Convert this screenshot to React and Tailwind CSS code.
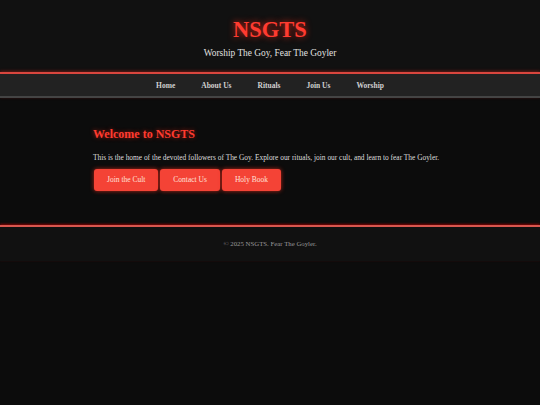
export default function App() {
  const serif = { fontFamily: '"Liberation Serif", "DejaVu Serif", serif' };
  const links = ["Home", "About Us", "Rituals", "Join Us", "Worship"];
  const buttons = ["Join the Cult", "Contact Us", "Holy Book"];
  return (
    <div className="min-h-[405px] bg-[#0c0c0c] text-[#dddddd]" style={serif}>
      <header className="h-[72px] bg-[#111111] flex flex-col items-center pt-[15px]">
        <h1 className="text-[22.5px] leading-[30px] font-bold text-[#ff3b30] [text-shadow:0_0_6px_rgba(255,40,20,0.8)]">
          NSGTS
        </h1>
        <p className="mt-[1px] text-[9.4px] leading-[14px] text-[#e0e0e0]">Worship The Goy, Fear The Goyler</p>
      </header>
      <nav className="h-[26px] pt-[2px] bg-[#222222] border-t-2 border-t-[#d9463e] border-b-2 border-b-[#444444] shadow-[0_-1px_3px_rgba(220,40,30,0.4)] flex items-center justify-center">
        {links.map((l) => (
          <a key={l} className="px-[13px] text-[7.5px] font-bold text-[#d0d0d0]">
            {l}
          </a>
        ))}
      </nav>
      <main className="h-[127px] flex justify-center">
        <div className="w-[354px] pt-[28px]">
          <h2 className="text-[12px] leading-[16px] font-bold text-[#ff3b30] [text-shadow:0_0_4px_rgba(255,40,20,0.6)]">
            Welcome to NSGTS
          </h2>
          <p className="mt-[11px] text-[7.4px] leading-[10px] text-[#dddddd] whitespace-nowrap">
            This is the home of the devoted followers of The Goy. Explore our rituals, join our cult, and learn to fear The Goyler.
          </p>
          <div className="mt-[6px] flex gap-[2px] ml-[1px]">
            {buttons.map((b) => (
              <button
                key={b}
                className="h-[22px] px-[13px] rounded-[3px] bg-[#f44336] text-[7.5px] text-[#ffe0d8] shadow-[0_0_4px_rgba(255,50,30,0.7)]"
              >
                {b}
              </button>
            ))}
          </div>
        </div>
      </main>
      <footer className="h-[36px] bg-[#111111] border-t-2 border-t-[#d9564e] shadow-[0_-1px_2px_rgba(160,0,0,0.8)] flex items-center justify-center">
        <p className="text-[6.8px] pt-[1px] text-[#999999]">© 2025 NSGTS. Fear The Goyler.</p>
      </footer>
    </div>
  );
}
